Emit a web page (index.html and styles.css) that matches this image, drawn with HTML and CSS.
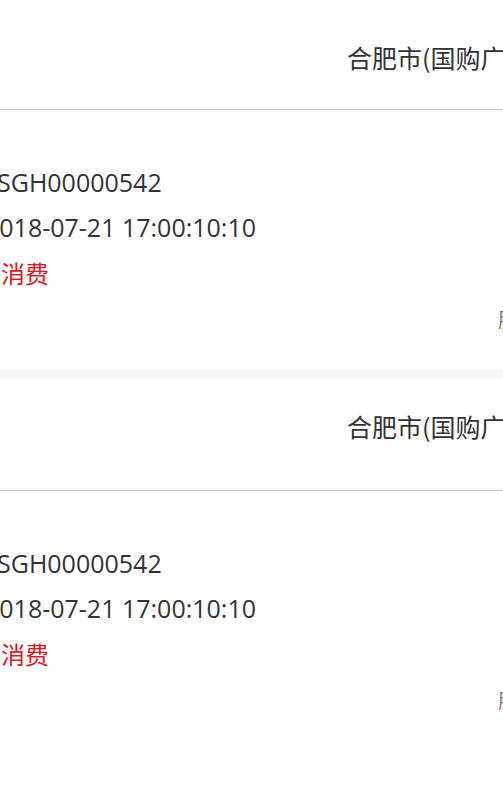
FILE: index.html
```html
<!DOCTYPE html>
<html lang="zh-CN">
<head>
<meta charset="utf-8">
<title>订单列表</title>
<link rel="stylesheet" href="styles.css">
</head>
<body>
<div class="page">
  <section class="card card-first">
    <div class="head"><span class="shop">合肥市(国购广场店)</span></div>
    <div class="row">
      <div class="info">
        <div class="line no">SGH00000542</div>
        <div class="line time">2018-07-21 17:00:10:10</div>
        <div class="line type">消费</div>
      </div>
      <div class="side">
        <div class="side-line faint">¥</div>
        <div class="side-line">服务</div>
      </div>
    </div>
  </section>
  <div class="band"></div>
  <section class="card">
    <div class="head"><span class="shop">合肥市(国购广场店)</span></div>
    <div class="row">
      <div class="info">
        <div class="line no">SGH00000542</div>
        <div class="line time">2018-07-21 17:00:10:10</div>
        <div class="line type">消费</div>
      </div>
      <div class="side">
        <div class="side-line faint">¥</div>
        <div class="side-line">服务</div>
      </div>
    </div>
  </section>
</div>
</body>
</html>
```
FILE: styles.css
```css
html, body {
  margin: 0;
  padding: 0;
  background: #ffffff;
}
body {
  font-family: "Open Sans", "Noto Sans CJK SC", sans-serif;
  color: #333333;
  overflow: hidden;
}
.page {
  width: 503px;
  overflow: hidden;
}
.card {
  background: #ffffff;
}
.head {
  padding: 29px 0 46px 347px;
  border-bottom: 1px solid #c8c8c8;
  white-space: nowrap;
  overflow: hidden;
}
.card-first .head {
  padding-top: 39px;
  padding-bottom: 34px;
}
.shop {
  font-family: "Noto Sans CJK SC", sans-serif;
  font-size: 25px;
  line-height: 36px;
  color: #333333;
}
.row {
  display: flex;
  padding: 50px 0 34px;
}
.info {
  flex: none;
}
.line {
  font-size: 25px;
  line-height: 45px;
  white-space: nowrap;
}
.no {
  margin-left: -3px;
}
.time {
  margin-left: -15px;
}
.type {
  margin-left: 1px;
  font-size: 24px;
  color: #e8141c;
  font-family: "Noto Sans CJK SC", sans-serif;
}
.side {
  margin-left: auto;
  width: 5px;
  margin-top: 115px;
  white-space: nowrap;
}
.side-line {
  font-family: "Noto Sans CJK SC", sans-serif;
  font-size: 20px;
  line-height: 30px;
  color: #777777;
}
.faint {
  padding-left: 4px;
  color: #d8d8d8;
}
.band {
  height: 10px;
  background: #f7f7f7;
}
```
